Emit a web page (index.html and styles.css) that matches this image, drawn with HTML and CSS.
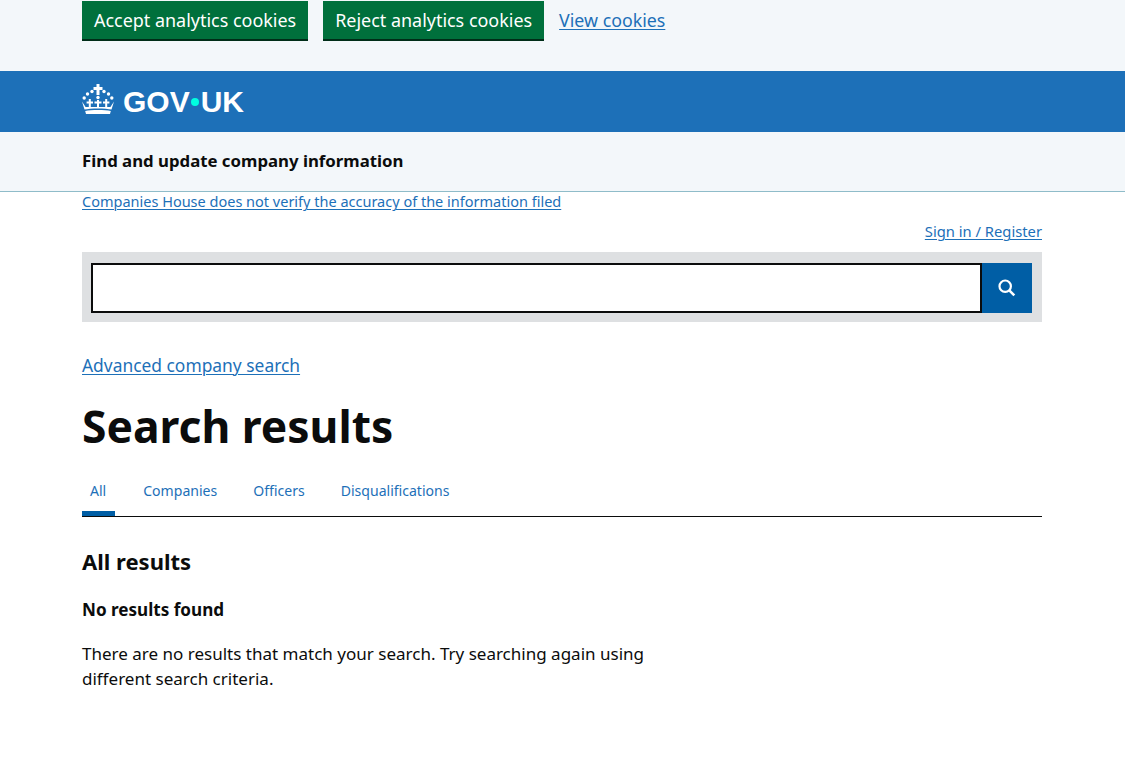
FILE: index.html
```html
<!DOCTYPE html>
<html lang="en">
<head>
<meta charset="utf-8">
<title>Search results</title>
<link rel="stylesheet" href="styles.css">
</head>
<body>
<div class="cookie-banner">
  <div class="container cookie-actions">
    <a class="btn" href="#">Accept analytics cookies</a>
    <a class="btn" href="#">Reject analytics cookies</a>
    <a class="cookie-link" href="#">View cookies</a>
  </div>
</div>
<header class="gov-header">
  <div class="container logo">
    <svg class="crown" viewBox="0 0 32 30" width="32" height="30" aria-hidden="true">
      <g fill="#fff">
        <path d="M14.500 0h3v3h3v3h-3v5h-3V6h-3V3h3z"/>
        <circle cx="16" cy="13.500" r="1.700"/>
        <circle cx="10" cy="7.500" r="1.700"/><circle cx="22" cy="7.500" r="1.700"/>
        <circle cx="5.500" cy="10" r="1.700"/><circle cx="26.500" cy="10" r="1.700"/>
        <circle cx="2.200" cy="14" r="1.700"/><circle cx="29.800" cy="14" r="1.700"/>
        <path d="M6.800 15h2v2.500h2.200v2H8.800V23h-2v-3.500H4.600v-2h2.200zM15 16h2v1.500h2.500v2H17V23h-2v-3.500h-2.500v-2H15zM23.200 15h2v2.500h2.200v2h-2.200V23h-2v-3.500H21v-2h2.200z"/>
        <path d="M0 17.500l3.600 5.500h24.800l3.600-5.500-2.500 8C24 24 8 24 2.500 25.500z"/>
        <path d="M3.200 27C9 25.600 23 25.600 28.800 27l-.8 3H4z"/>
      </g>
    </svg>
    <span class="wordmark">GOV<span class="dot"></span>UK</span>
  </div>
</header>
<div class="service-bar">
  <div class="container service-name">Find and update company information</div>
</div>
<main class="container">
  <p class="notice"><a href="#">Companies House does not verify the accuracy of the information filed</a></p>
  <p class="account"><a href="#">Sign in / Register</a></p>
  <form class="search">
    <input class="search-input" type="text" aria-label="Search">
    <button class="search-btn" type="button" aria-label="Search">
      <svg viewBox="0 0 20 20" width="20" height="20" aria-hidden="true">
        <circle cx="8.200" cy="8.200" r="5.700" fill="none" stroke="#fff" stroke-width="2.200"/>
        <path d="M12.300 12.300l5 5" stroke="#fff" stroke-width="2.600" fill="none"/>
      </svg>
    </button>
  </form>
  <p class="advanced"><a href="#">Advanced company search</a></p>
  <h1>Search results</h1>
  <nav class="tabs">
    <a class="tab active" href="#">All</a>
    <a class="tab" href="#">Companies</a>
    <a class="tab" href="#">Officers</a>
    <a class="tab" href="#">Disqualifications</a>
  </nav>
  <h2>All results</h2>
  <h3>No results found</h3>
  <p class="message">There are no results that match your search. Try searching again using different search criteria.</p>
</main>
</body>
</html>
```
FILE: styles.css
```css
* { box-sizing: border-box; }
html, body { margin: 0; padding: 0; }
body {
  font-family: "Noto Sans", "Liberation Sans", sans-serif;
  color: #0b0c0c;
  background: #fff;
}
a { color: #1d70b8; text-decoration: underline; text-underline-offset: 2px; text-decoration-thickness: 1px; }
.container { width: 960px; margin-left: 82px; }

.cookie-banner { height: 71px; background: #f3f7fa; padding-top: 1px; }
.cookie-actions { display: flex; align-items: flex-start; gap: 15px; }
.btn {
  display: block;
  height: 40px;
  padding: 0 12px;
  background: #00703c;
  box-shadow: inset 0 -2px 0 #002d18;
  color: #fff;
  font-size: 17.950px;
  line-height: 38px;
  text-decoration: none;
}
.cookie-link { font-size: 17.800px; line-height: 38px; }

.gov-header { height: 61px; background: #1d70b8; }
.logo { height: 61px; display: flex; align-items: center; gap: 9px; }
.crown { flex: none; margin-top: -5px; }
.wordmark {
  color: #fff;
  font-family: "Liberation Sans", Arial, sans-serif;
  font-weight: 700;
  font-size: 30px;
  line-height: 1;
  display: flex;
  align-items: center;
}
.dot { width: 8px; height: 8px; margin: 0 2px 0 1px; border-radius: 50%; background: #00ffe0; }

.service-bar { height: 60px; background: #f3f7fa; border-bottom: 1px solid #8fbcc9; }
.service-name { font-size: 16.800px; font-weight: 700; line-height: 58px; }

.notice { margin: 0; font-size: 14.500px; line-height: 18px; }
.account { margin: 11px 0 0; font-size: 14.750px; line-height: 20px; text-align: right; }

.search { display: flex; height: 70px; margin-top: 11px; padding: 11px 10px 9px 9px; background: #dee0e2; }
.search-input { flex: 1; height: 50px; border: 2px solid #0b0c0c; background: #fff; border-radius: 0; outline: 0; }
.search-btn { flex: none; width: 50px; height: 50px; padding: 0; border: 0; background: #005ea5; display: flex; align-items: center; justify-content: center; }

.advanced { margin: 31px 0 0; font-size: 17.400px; line-height: 24px; }
h1 { margin: 24px 0 0; font-size: 44.400px; line-height: 50px; font-weight: 700; }

.tabs { display: flex; margin-top: 24px; height: 42px; border-bottom: 1px solid #0b0c0c; }
.tab { display: block; padding: 0 8px; margin-right: 20px; font-size: 14.050px; line-height: 31px; text-decoration: none; height: 41px; }
.tab.active { padding-right: 9px; box-shadow: inset 0 -5px 0 #005ea5; }

h2 { margin: 29px 0 0; font-size: 22px; line-height: 30px; font-weight: 700; }
h3 { margin: 21px 0 0; font-size: 17.100px; line-height: 25px; font-weight: 700; }
.message { margin: 19px 0 0; width: 600px; font-size: 17.020px; line-height: 25px; }
```
